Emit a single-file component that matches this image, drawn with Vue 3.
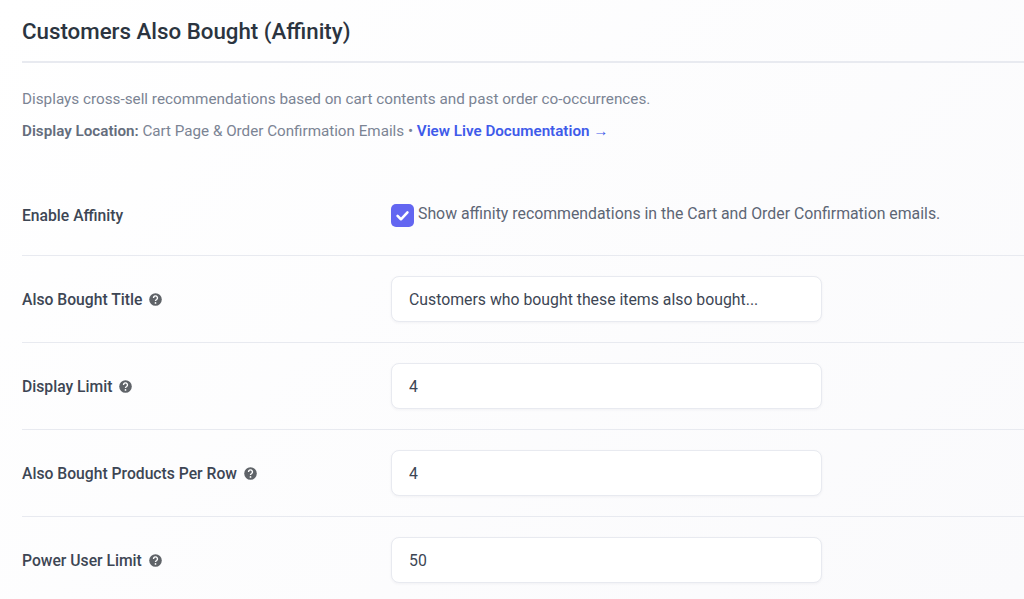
<script setup>
const rows = [
  { label: 'Also Bought Title', value: 'Customers who bought these items also bought...' },
  { label: 'Display Limit', value: '4' },
  { label: 'Also Bought Products Per Row', value: '4' },
  { label: 'Power User Limit', value: '50' },
]
</script>

<template>
  <div class="page">
    <h2 class="title">Customers Also Bought (Affinity)</h2>
    <p class="desc">Displays cross-sell recommendations based on cart contents and past order co-occurrences.</p>
    <p class="loc">
      <strong>Display Location:</strong> Cart Page &amp; Order Confirmation Emails •
      <a class="doc" href="#">View Live Documentation <span class="arrow">→</span></a>
    </p>

    <div class="settings">
      <div class="row first">
        <div class="label">Enable Affinity</div>
        <label class="check">
          <span class="box">
            <svg viewBox="0 0 24 24" width="17" height="17">
              <path d="M5 12.5l4.8 4.8L19 7.5" fill="none" stroke="#fff" stroke-width="3.6" stroke-linecap="round" stroke-linejoin="round" />
            </svg>
          </span>
          <span>Show affinity recommendations in the Cart and Order Confirmation emails.</span>
        </label>
      </div>
      <div v-for="row in rows" :key="row.label" class="row">
        <div class="label">
          {{ row.label }}
          <svg class="help" viewBox="0 0 16 16" width="15" height="15">
            <circle cx="8" cy="8" r="6.7" fill="#5f6368" />
            <path d="M5.9 6.3a2.1 2.1 0 1 1 3.3 1.7c-.8.5-1.2.9-1.2 1.6" fill="none" stroke="#fff" stroke-width="1.5" />
            <circle cx="8" cy="11.6" r="0.95" fill="#fff" />
          </svg>
        </div>
        <input class="field" type="text" :value="row.value" />
      </div>
    </div>
  </div>
</template>

<style scoped>
.page {
  height: 599px;
  overflow: hidden;
  padding: 0 0 0 22px;
  box-sizing: border-box;
  background: linear-gradient(135deg, #ffffff 0%, #fafafc 100%);
  font-family: Roboto, "Liberation Sans", sans-serif;
}

.title {
  margin: 0;
  padding: 17px 0 16px;
  font-size: 22.3px;
  line-height: 28px;
  font-weight: 500;
  color: #2b3440;
  border-bottom: 2px solid #e8eaf0;
}

.desc {
  margin: 27px 0 0;
  font-size: 15.27px;
  line-height: 18px;
  color: #7b8494;
}

.loc {
  margin: 14px 0 0;
  font-size: 15.2px;
  line-height: 18px;
  color: #7b8494;
}

.loc strong {
  font-weight: 600;
  color: #646d7c;
}

.doc {
  color: #3f5bea;
  font-weight: 600;
  text-decoration: none;
}

.arrow {
  font-weight: 400;
}

.settings {
  margin-top: 40px;
}

.row {
  display: flex;
  align-items: center;
  height: 87px;
  box-sizing: border-box;
  border-top: 1px solid #e8eaf0;
}

.row.first {
  height: 75px;
  border-top: 0;
  padding-bottom: 4px;
}

.label {
  width: 369px;
  flex: none;
  display: flex;
  align-items: center;
  gap: 6px;
  font-size: 15.7px;
  font-weight: 500;
  color: #3d4654;
}

.check {
  display: flex;
  align-items: center;
  gap: 4px;
  font-size: 15.84px;
  color: #5d6675;
  margin-top: -5px;
}

.box {
  width: 23px;
  height: 23px;
  flex: none;
  margin-top: 4px;
  display: flex;
  align-items: center;
  justify-content: center;
  background: #6366f1;
  border-radius: 5px;
}

.field {
  width: 431px;
  height: 46px;
  padding: 0 17px;
  box-sizing: border-box;
  background: #fff;
  border: 1px solid #e8eaf0;
  border-radius: 8px;
  box-shadow: 0 1px 3px rgba(30, 40, 70, 0.05);
  font-family: inherit;
  font-size: 15.82px;
  color: #3d4654;
  outline: none;
}
</style>
